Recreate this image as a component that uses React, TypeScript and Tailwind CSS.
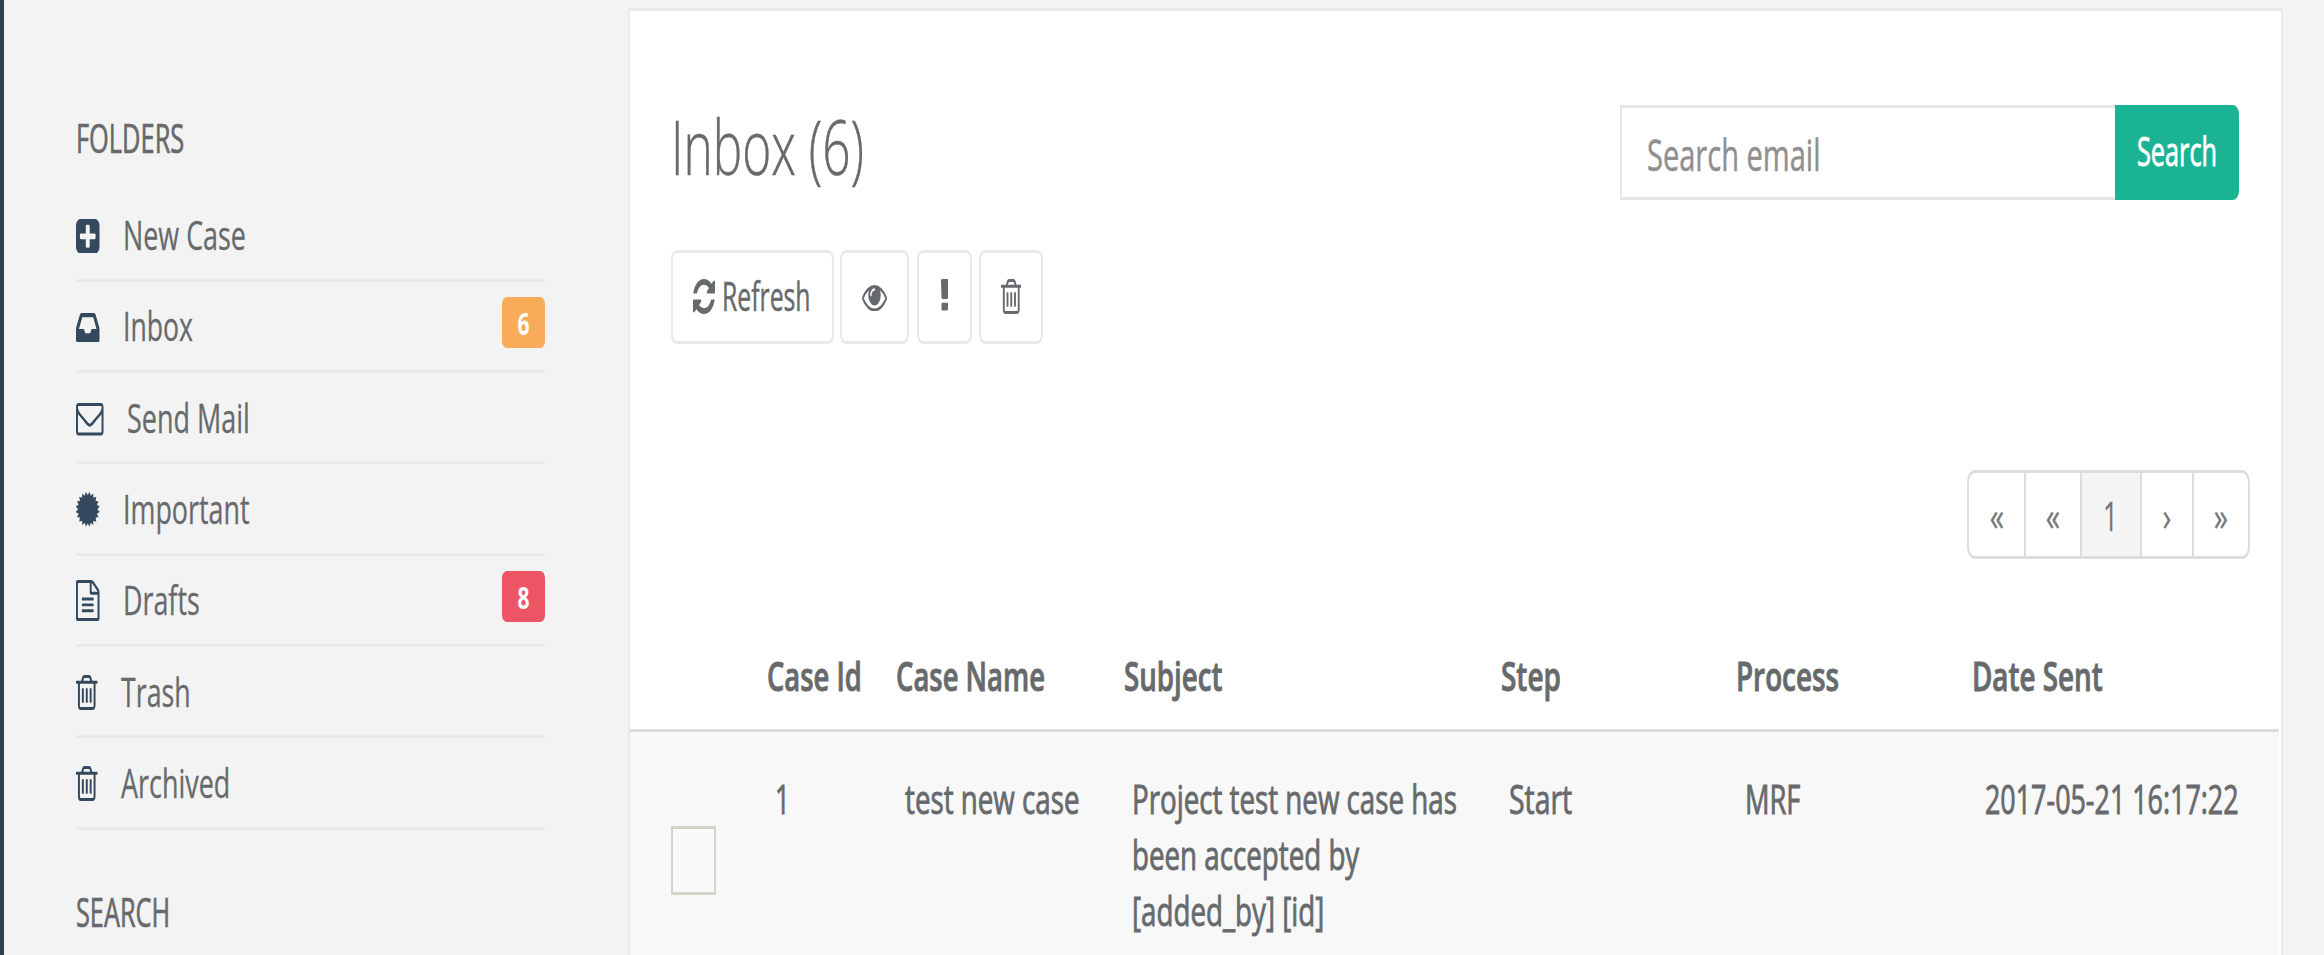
import React from "react";
import type { ReactNode } from "react";

type Glyph = { box: string; d: string };

const BAR = (x: number) =>
  `M${x} 736v576q0 14-9 23t-23 9h-64q-14 0-23-9t-9-23v-576q0-14 9-23t23-9h64q14 0 23 9t9 23z`;

/* Seal outline: alternating outer and inner points round a circle. */
const SEAL = Array.from({ length: 40 }, (_, i) => {
  const r = i % 2 === 0 ? 790 : 630;
  const a = ((i + 1) * Math.PI) / 20;
  return `${i === 0 ? "M" : "L"}${(896 + r * Math.cos(a)).toFixed(0)} ${(896 + r * Math.sin(a)).toFixed(0)}`;
}).join("") + "z";

const glyphs: Record<string, Glyph> = {
  plus: {
    box: "128 128 1536 1536",
    d: "M1408 960v-128q0-26-19-45t-45-19h-320v-320q0-26-19-45t-45-19h-128q-26 0-45 19t-19 45v320h-320q-26 0-45 19t-19 45v128q0 26 19 45t45 19h320v320q0 26 19 45t45 19h128q26 0 45-19t19-45v-320h320q26 0 45-19t19-45zm256-544v960q0 119-84.5 203.5t-203.5 84.5h-960q-119 0-203.5-84.5t-84.5-203.5v-960q0-119 84.5-203.5t203.5-84.5h960q119 0 203.5 84.5t84.5 203.5z",
  },
  inbox: {
    box: "128 256 1536 1280",
    d: "M1151 960h316q-1-3-2.5-8t-2.5-8l-212-496h-708l-212 496q-1 2-2.5 8t-2.5 8h316l95 192h320zm513 30v482q0 26-19 45t-45 19h-1408q-26 0-45-19t-19-45v-482q0-62 25-123l238-552q10-25 36.5-42t52.5-17h832q26 0 52.5 17t36.5 42l238 552q25 61 25 123z",
  },
  envelope: {
    box: "0 256 1792 1408",
    d: "M1664 1504v-768q-32 36-69 66-268 206-426 338-51 43-83 67t-86.5 48.5-102.5 24.5h-2q-48 0-102.5-24.5t-86.5-48.5-83-67q-158-132-426-338-37-30-69-66v768q0 13 9.5 22.5t22.5 9.5h1472q13 0 22.5-9.5t9.5-22.5zm0-1051v-24.5l-.5-13-3-12.5-5.5-9-9-7.5-14-2.5h-1472q-13 0-22.5 9.5t-9.5 22.5q0 168 147 284 193 152 401 317 6 5 35 29.5t46 37.5 44.5 31.5 50.5 27.5 43 9h2q20 0 43-9t50.5-27.5 44.5-31.5 46-37.5 35-29.5q208-165 401-317 54-43 100.5-115.5t46.5-131.5zm128-37v1088q0 66-47 113t-113 47h-1472q-66 0-113-47t-47-113v-1088q0-66 47-113t113-47h1472q66 0 113 47t47 113z",
  },
  certificate: { box: "128 128 1536 1536", d: SEAL },
  file: {
    box: "128 0 1536 1792",
    d: "M1596 380q28 28 48 76t20 88v1152q0 40-28 68t-68 28h-1344q-40 0-68-28t-28-68v-1600q0-40 28-68t68-28h896q40 0 88 20t76 48zm-444-244v376h376q-10-29-22-41l-313-313q-12-12-41-22zm384 1528v-1024h-416q-40 0-68-28t-28-68v-416h-768v1536h1280zm-1024-864q0-14 9-23t23-9h704q14 0 23 9t9 23v64q0 14-9 23t-23 9h-704q-14 0-23-9t-9-23v-64zm736 224q14 0 23 9t9 23v64q0 14-9 23t-23 9h-704q-14 0-23-9t-9-23v-64q0-14 9-23t23-9h704zm0 256q14 0 23 9t9 23v64q0 14-9 23t-23 9h-704q-14 0-23-9t-9-23v-64q0-14 9-23t23-9h704z",
  },
  trash: {
    box: "192 128 1408 1536",
    d: `${BAR(704)}${BAR(960)}${BAR(1216)}M1344 1460v-948h-896v948q0 22 7 40.5t14.5 27 10.5 8.5h832q3 0 10.5-8.5t14.5-27 7-40.5zm-672-1076h448l-48-117q-7-9-17-11h-317q-10 2-17 11zm928 32v64q0 14-9 23t-23 9h-96v948q0 83-47 143.5t-113 60.5h-832q-66 0-113-58.5t-47-141.5v-952h-96q-14 0-23-9t-9-23v-64q0-14 9-23t23-9h309l70-167q15-37 54-63t79-26h320q40 0 79 26t54 63l70 167h309q14 0 23 9t9 23z`,
  },
  refresh: {
    box: "128 128 1536 1536",
    d: "M1639 1056q0 5-1 7-64 268-268 434.5t-478 166.5q-146 0-282.5-55t-243.5-157l-129 129q-19 19-45 19t-45-19-19-45v-448q0-26 19-45t45-19h448q26 0 45 19t19 45-19 45l-137 137q71 66 161 102t187 36q134 0 250-65t186-179q11-17 53-117 8-23 30-23h192q13 0 22.5 9.5t9.5 22.5zm25-800v448q0 26-19 45t-45 19h-448q-26 0-45-19t-19-45 19-45l138-138q-148-137-349-137-134 0-250 65t-186 179q-11 17-53 117-8 23-30 23h-199q-13 0-22.5-9.5t-9.5-22.5v-7q65-268 270-434.5t480-166.5q146 0 284 55.5t245 156.5l130-129q19-19 45-19t45 19 19 45z",
  },
  eye: {
    box: "0 384 1792 1152",
    d: "M1664 960q-152-236-381-353 61 104 61 225 0 185-131.5 316.5t-316.5 131.5-316.5-131.5-131.5-316.5q0-121 61-225-229 117-381 353 133 205 333.5 326.5t434.5 121.5 434.5-121.5 333.5-326.5zm-720-384q0-20-14-34t-34-14q-125 0-214.5 89.5t-89.5 214.5q0 20 14 34t34 14 34-14 14-34q0-86 61-147t147-61q20 0 34-14t14-34zm848 384q0 34-20 69-140 230-376.5 368.5t-499.5 138.5-499.5-139-376.5-368q-20-35-20-69t20-69q140-229 376.5-368t499.5-139 499.5 139 376.5 368q20 35 20 69z",
  },
  exclamation: {
    box: "674 128 444 1408",
    d: "M1088 1248v224q0 26-19 45t-45 19h-256q-26 0-45-19t-19-45v-224q0-26 19-45t45-19h256q26 0 45 19t19 45zm30-1056l-28 768q-1 26-20.5 45t-45.5 19h-256q-26 0-45.5-19t-20.5-45l-28-768q-1-26 17.5-45t44.5-19h320q26 0 44.5 19t17.5 45z",
  },
};

function Icon({ name, className }: { name: string; className: string }) {
  const g = glyphs[name];
  return (
    <svg viewBox={g.box} preserveAspectRatio="none" fill="currentColor" className={`shrink-0 ${className}`}>
      <path d={g.d} />
    </svg>
  );
}

/* Condensed label: the scale class sets how narrow the letters are drawn. */
function Label({ className, children }: { className: string; children: ReactNode }) {
  return <span className={`block w-max origin-left whitespace-nowrap ${className}`}>{children}</span>;
}

const folders = [
  { label: "New Case", scale: "scale-x-[0.672]", icon: "plus", size: "w-[23.5px] h-[34.5px] mt-[3px]" },
  { label: "Inbox", scale: "scale-x-[0.665]", icon: "inbox", size: "w-[23.5px] h-[29px] mt-[3px]", badge: "6", tone: "bg-[#f8ac59]" },
  { label: "Send Mail", scale: "scale-x-[0.674]", icon: "envelope", size: "w-[27.5px] h-[32.5px] mt-[5px]" },
  { label: "Important", scale: "scale-x-[0.672]", icon: "certificate", size: "w-[23.5px] h-[34.5px] mt-[2px]" },
  { label: "Drafts", scale: "scale-x-[0.671]", icon: "file", size: "w-[23.5px] h-[41px] mt-[2px]", badge: "8", tone: "bg-[#ed5565]" },
  { label: "Trash", scale: "scale-x-[0.668]", icon: "trash", size: "w-[21.5px] h-[35px] mt-[2px]" },
  { label: "Archived", scale: "scale-x-[0.673]", icon: "trash", size: "w-[21.5px] h-[35px] mt-[2px]" },
];

const columns = [
  { label: "Case Id", scale: "scale-x-[0.685]" },
  { label: "Case Name", scale: "scale-x-[0.686]" },
  { label: "Subject", scale: "scale-x-[0.692]" },
  { label: "Step", scale: "scale-x-[0.698]" },
  { label: "Process", scale: "scale-x-[0.696]" },
  { label: "Date Sent", scale: "scale-x-[0.695]" },
];

const cells = [
  { lines: ["1"], className: "pl-[8.4px]", scale: "scale-x-[0.65]" },
  { lines: ["test new case"], className: "pl-[8.7px]", scale: "scale-x-[0.693]" },
  { lines: ["Project test new case has", "been accepted by", "[added_by] [id]"], className: "pl-[8.6px]", scale: "scale-x-[0.693]" },
  { lines: ["Start"], className: "pl-[8px]", scale: "scale-x-[0.71]" },
  { lines: ["MRF"], className: "pl-[9.4px]", scale: "scale-x-[0.682]" },
  { lines: ["2017-05-21 16:17:22"], className: "pl-[13.5px]", scale: "scale-x-[0.672]" },
];

const pages = [
  { label: "«", className: "w-[56.8px] border-r-2", scale: "scale-x-[0.722]" },
  { label: "«", className: "w-[55.7px] border-r-2", scale: "scale-x-[0.722]" },
  { label: "1", className: "w-[60px] border-r-2 bg-[#f4f4f4]", scale: "scale-x-[0.65]" },
  { label: "›", className: "w-[52px] border-r-2", scale: "scale-x-[0.74]" },
  { label: "»", className: "w-[53.7px]", scale: "scale-x-[0.722]" },
];

const GRID = "grid grid-cols-[136.6px_129.4px_227.3px_377.6px_234.4px_235.9px_1fr]";
const TOOL = "flex items-center rounded-[6px/9px] border-x-2 border-y-[3px] border-[#e7eaec] bg-white";

function Sidebar() {
  return (
    <aside className="ml-[72px] w-[469px] shrink-0 pt-[110px]">
      <h5 className="h-14">
        <Label className="scale-x-[0.635] text-[40px] leading-[56px] [-webkit-text-stroke:0.7px]">FOLDERS</Label>
      </h5>
      <ul className="mt-[24.4px]">
        {folders.map((f) => (
          <li key={f.label} className="flex h-[91.33px] items-center border-b-[3px] border-[#e7eaec]">
            <Icon name={f.icon} className={`text-[#34495e] ${f.size}`} />
            <Label className={`mt-px ml-[23.2px] text-[40px] leading-[56px] [-webkit-text-stroke:0.3px] ${f.scale}`}>{f.label}</Label>
            {f.badge && (
              <span className={`mb-[7px] ml-auto flex h-[50.5px] w-[43px] items-center justify-center rounded-[5px/7px] pt-[2px] text-[30px] font-bold text-white ${f.tone}`}>
                <span className="scale-x-[0.7]">{f.badge}</span>
              </span>
            )}
          </li>
        ))}
      </ul>
      <h5 className="mt-[54.5px] h-14">
        <Label className="scale-x-[0.632] text-[40px] leading-[56px] [-webkit-text-stroke:0.7px]">SEARCH</Label>
      </h5>
    </aside>
  );
}

function Mailbox() {
  return (
    <main className="mt-2 ml-[83px] flex w-[1655px] shrink-0 flex-col border-x-2 border-t-[3px] border-[#e7eaec] bg-white pt-[93.5px]">
      <header className="flex h-[95.5px] justify-between pr-[42px] pl-[41.4px]">
        <h2 className="w-[200px]">
          <Label className="scale-x-[0.652] text-[76px] leading-[82px] font-light [-webkit-text-stroke:0.5px]">Inbox (6)</Label>
        </h2>
        <div className="flex w-[618.7px] shrink-0">
          <div className="flex w-[494.5px] shrink-0 items-center border-y-[3px] border-l-2 border-[#e5e6e7] pl-[24.5px]">
            <Label className="mt-[3px] scale-x-[0.66] text-[44px] leading-[60px] text-[#8f8f8f] [-webkit-text-stroke:0.5px]">Search email</Label>
          </div>
          <button className="flex w-[124.2px] shrink-0 items-center rounded-r-[6px_9px] bg-[#1ab394] pl-[22px] text-white">
            <Label className="mb-[3px] scale-x-[0.632] text-[40px] leading-[56px] [-webkit-text-stroke:0.9px]">Search</Label>
          </button>
        </div>
      </header>

      <div className="mt-[50px] flex h-[93.5px] pl-[41.4px]">
        <button className={`w-[162.4px] pl-5 ${TOOL}`}>
          <Icon name="refresh" className="h-[35px] w-[22px]" />
          <Label className="mb-px ml-[6.6px] scale-x-[0.619] text-[40px] leading-[56px] [-webkit-text-stroke:0.5px]">Refresh</Label>
        </button>
        <button className={`ml-[6.4px] w-[69px] justify-center ${TOOL}`}>
          <Icon name="eye" className="mt-[2px] h-[26.5px] w-[25px]" />
        </button>
        <button className={`ml-[7.6px] w-[55px] justify-center ${TOOL}`}>
          <Icon name="exclamation" className="mb-[4px] h-[31.5px] w-[7.5px]" />
        </button>
        <button className={`ml-[7px] w-[64px] justify-center ${TOOL}`}>
          <Icon name="trash" className="h-[35px] w-[20.5px]" />
        </button>
      </div>

      <nav className="mt-[126.5px] mr-[31.5px] flex h-[88.7px] w-[282.4px] shrink-0 self-end overflow-hidden rounded-[8px/12px] border-x-2 border-y-[3px] border-[#dddddd] text-[#75787a]">
        {pages.map((p, i) => (
          <div key={i} className={`flex shrink-0 items-center justify-center border-[#dddddd] pt-[3px] text-[40px] leading-[56px] [-webkit-text-stroke:0.3px] ${p.className}`}>
            <span className={p.scale}>{p.label}</span>
          </div>
        ))}
      </nav>

      <div className="mt-[62px] mr-[2px] flex flex-1 flex-col">
        <div className={`${GRID} h-[111.4px] shrink-0 items-center border-b-[3px] border-[#dddddd] pt-[2px]`}>
          <span />
          {columns.map((c) => (
            <Label key={c.label} className={`ml-[0.5px] text-[40px] leading-[56px] font-semibold [-webkit-text-stroke:0.9px] ${c.scale}`}>
              {c.label}
            </Label>
          ))}
        </div>
        <div className={`${GRID} flex-1 bg-[#f8f8f8] pt-[38.6px]`}>
          <div className="pt-[55.7px] pl-[41px]">
            <div className="h-[69px] w-[45px] border-x-2 border-y-[3px] border-[#d6d3cb] bg-[#fafafa]" />
          </div>
          {cells.map((c, i) => (
            <div key={i} className={`min-w-0 ${c.className}`}>
              {c.lines.map((line) => (
                <Label key={line} className={`text-[40px] leading-[56.4px] [-webkit-text-stroke:0.9px] ${c.scale}`}>
                  {line}
                </Label>
              ))}
            </div>
          ))}
        </div>
      </div>
    </main>
  );
}

export default function App() {
  return (
    <div className="flex h-[955px] w-[2324px] overflow-hidden bg-[#f3f3f3] font-['Open_Sans',sans-serif] text-[#676a6c]">
      <div className="w-1 shrink-0 bg-[#2f4050]" />
      <Sidebar />
      <Mailbox />
    </div>
  );
}
